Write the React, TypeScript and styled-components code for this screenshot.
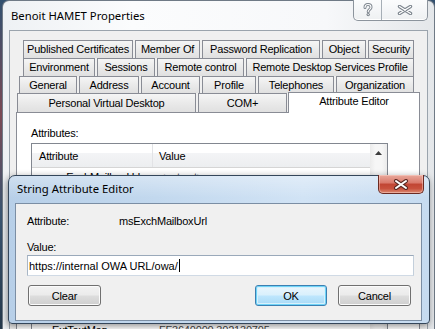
import React from 'react';
import styled, {createGlobalStyle, css} from 'styled-components';

const UI_FONT = '"Liberation Sans", Arial, sans-serif';
const CAPTION_FONT = '"Noto Sans", "Open Sans", sans-serif';

const GlobalStyle = createGlobalStyle`
  html, body {
    margin: 0;
    padding: 0;
    background: #41566e;
  }
  body {
    font-family: ${UI_FONT};
    font-size: 11px;
    letter-spacing: -0.2px;
    color: #000;
  }
`;

interface ITab {
  label: string;
  width: number;
  active?: boolean;
}

const tabRows: {indent: number; height: number; tabs: ITab[]}[] = [
  {
    indent: 7,
    height: 18,
    tabs: [
      {label: 'Published Certificates', width: 110},
      {label: 'Member Of', width: 65},
      {label: 'Password Replication', width: 118},
      {label: 'Object', width: 44},
      {label: 'Security', width: 46},
    ],
  },
  {
    indent: 7,
    height: 18,
    tabs: [
      {label: 'Environment', width: 72},
      {label: 'Sessions', width: 58},
      {label: 'Remote control', width: 87},
      {label: 'Remote Desktop Services Profile', width: 168},
    ],
  },
  {
    indent: 3,
    height: 17,
    tabs: [
      {label: 'General', width: 58},
      {label: 'Address', width: 60},
      {label: 'Account', width: 59},
      {label: 'Profile', width: 54},
      {label: 'Telephones', width: 76},
      {label: 'Organization', width: 78},
    ],
  },
  {
    indent: 1,
    height: 19,
    tabs: [
      {label: 'Personal Virtual Desktop', width: 179},
      {label: 'COM+', width: 89},
      {label: 'Attribute Editor', width: 132, active: true},
    ],
  },
];

// rows behind the editor dialog are left blank, only the first and
// the last one peek out around it
const attributeRows = [
  ['msExchMailboxUrl', '<not set>'],
  ['', ''],
  ['', ''],
  ['', ''],
  ['', ''],
  ['', ''],
  ['', ''],
  ['', ''],
  ['', ''],
  ['ExtTextMsg', 'FF3640000 302130705'],
];

const App: React.FC = () => {
  return (
    <StyledScreen>
      <GlobalStyle />
      <StyledOuterWindow>
        <StyledTitleBar>
          <StyledTitle>Benoit HAMET Properties</StyledTitle>
          <StyledCaptionGroup>
            <StyledCaptionButton $w={27}>
              <svg width="12" height="14" viewBox="0 0 12 14">
                <path d="M3 4.5C3 2.3 4.5 1.5 6 1.5S9 2.3 9 4.2C9 6.3 6.2 6.4 6.2 8.8"
                  fill="none" stroke="#7d858e" strokeWidth="3" strokeLinecap="round" />
                <path d="M3 4.5C3 2.3 4.5 1.5 6 1.5S9 2.3 9 4.2C9 6.3 6.2 6.4 6.2 8.8"
                  fill="none" stroke="#fff" strokeWidth="1.1" strokeLinecap="round" />
                <circle cx="6.2" cy="11.6" r="1.7" fill="#7d858e" />
                <circle cx="6.2" cy="11.6" r="0.7" fill="#fff" />
              </svg>
            </StyledCaptionButton>
            <StyledCaptionButton $w={45}>
              <svg width="16" height="10" viewBox="0 0 16 10">
                <path d="M2.5 1.5L13.5 8.5M13.5 1.5L2.5 8.5"
                  stroke="#7d858e" strokeWidth="3.4" strokeLinecap="round" />
                <path d="M2.5 1.5L13.5 8.5M13.5 1.5L2.5 8.5"
                  stroke="#fff" strokeWidth="1.3" strokeLinecap="round" />
              </svg>
            </StyledCaptionButton>
          </StyledCaptionGroup>
        </StyledTitleBar>

        <StyledClientArea>
          {tabRows.map((row, i) => (
            <StyledTabRow key={i} $indent={row.indent} $height={row.height}>
              {row.tabs.map((tab) => (
                <StyledTab key={tab.label} $w={tab.width} $active={tab.active}>
                  {tab.label}
                </StyledTab>
              ))}
            </StyledTabRow>
          ))}
          <StyledPanel>
            <StyledPanelLabel>Attributes:</StyledPanelLabel>
            <StyledListBox>
              <StyledListColumns>
                <StyledListHeader>
                  <StyledHeaderCell $w={120}>Attribute</StyledHeaderCell>
                  <StyledHeaderCell>Value</StyledHeaderCell>
                </StyledListHeader>
                {attributeRows.map(([name, value], i) => (
                  <StyledListRow key={i}>
                    <StyledListCell $w={120}>{name}</StyledListCell>
                    <StyledListCell $muted>{value}</StyledListCell>
                  </StyledListRow>
                ))}
              </StyledListColumns>
              <StyledScrollBar>
                <StyledScrollArrow>
                  <svg width="7" height="4" viewBox="0 0 7 4">
                    <path d="M0 4L3.5 0L7 4Z" fill="#3c3c3c" />
                  </svg>
                </StyledScrollArrow>
              </StyledScrollBar>
            </StyledListBox>
          </StyledPanel>
        </StyledClientArea>
      </StyledOuterWindow>

      <StyledDialog>
        <StyledDialogTitleBar>
          <StyledDialogTitle>String Attribute Editor</StyledDialogTitle>
          <StyledCloseButton>
            <svg width="16" height="11" viewBox="0 0 16 11">
              <path d="M3 2L13 9M13 2L3 9"
                stroke="#5a2a24" strokeWidth="4" strokeLinecap="round" />
              <path d="M3 2L13 9M13 2L3 9"
                stroke="#fff" strokeWidth="2" strokeLinecap="round" />
            </svg>
          </StyledCloseButton>
        </StyledDialogTitleBar>
        <StyledDialogClient>
          <StyledFieldRow>
            <StyledFieldLabel>Attribute:</StyledFieldLabel>
            <span>msExchMailboxUrl</span>
          </StyledFieldRow>
          <StyledValueLabel>Value:</StyledValueLabel>
          <StyledInput>
            https://internal OWA URL/owa/<StyledCaret />
          </StyledInput>
          <StyledButtonRow>
            <StyledButton>Clear</StyledButton>
            <StyledButtonSpacer />
            <StyledButton $w={72} $default>OK</StyledButton>
            <StyledButton>Cancel</StyledButton>
          </StyledButtonRow>
        </StyledDialogClient>
      </StyledDialog>
    </StyledScreen>
  );
};

const StyledScreen = styled.div`
  position: relative;
  width: 435px;
  height: 329px;
  overflow: hidden;
  background: linear-gradient(180deg, #31506f 0%, #7a4a55 35%, #3a5673 65%, #26394c 100%);
`;

const StyledOuterWindow = styled.div`
  box-sizing: border-box;
  margin-left: 2px;
  width: 433px;
  height: 360px;
  border: 1px solid #6f7a86;
  border-bottom: none;
  border-radius: 7px 7px 0 0;
  background: linear-gradient(90deg, #eef1f4 0%, #fbfcfd 30%, #f7f8fa 75%, #e4e7ea 100%);
  display: flex;
  flex-direction: column;
`;

const StyledTitleBar = styled.div`
  flex: none;
  height: 29px;
  display: flex;
  align-items: flex-start;
`;

const StyledTitle = styled.div`
  flex: 1;
  padding: 7px 0 0 8px;
  font-family: ${CAPTION_FONT};
  font-size: 11.3px;
  letter-spacing: 0;
  line-height: 16px;
  color: #000;
`;

const StyledCaptionGroup = styled.div`
  display: flex;
  height: 20px;
  margin: -1px 6px 0 0;
  border: 1px solid #8c949d;
  border-top: none;
  border-radius: 0 0 5px 5px;
  overflow: hidden;
  background: linear-gradient(180deg, #fbfcfd 0%, #eef0f2 100%);
  box-shadow: inset 0 -1px 0 #fff;
`;

const StyledCaptionButton = styled.div<{$w: number}>`
  width: ${(p) => p.$w}px;
  display: flex;
  align-items: center;
  justify-content: center;
  & + & {
    border-left: 1px solid #a6aeb6;
  }
`;

const StyledClientArea = styled.div`
  flex: none;
  margin: 0 6px 0 6px;
  padding: 9px 7px 0 6px;
  border: 1px solid #9ba4ad;
  border-bottom: none;
  background: #f0f0f0;
`;

const StyledTabRow = styled.div<{$indent: number; $height: number}>`
  display: flex;
  align-items: flex-end;
  height: ${(p) => p.$height}px;
  padding-left: ${(p) => p.$indent}px;
`;

const StyledTab = styled.div<{$w: number; $active?: boolean}>`
  box-sizing: border-box;
  flex: none;
  width: ${(p) => p.$w}px;
  height: 100%;
  margin-right: 2px;
  border: 1px solid #898c95;
  border-bottom: none;
  background: linear-gradient(180deg, #f5f5f5 0%, #e9e9e9 55%, #e0e0e0 100%);
  display: flex;
  align-items: center;
  justify-content: center;
  white-space: nowrap;
  font-size: 11px;
  line-height: 13px;
  ${(p) => p.$active && css`
    position: relative;
    z-index: 1;
    height: 21px;
    margin: 0 0 -1px -1px;
    padding-bottom: 3px;
    background: #fff;
  `}
`;

const StyledPanel = styled.div`
  height: 260px;
  padding: 14px 0 0 14px;
  border: 1px solid #898c95;
  background: #fff;
`;

const StyledPanelLabel = styled.div`
  line-height: 13px;
`;

const StyledListBox = styled.div`
  display: flex;
  width: 357px;
  height: 220px;
  margin-top: 3px;
  box-sizing: border-box;
  border: 1px solid #828790;
  background: #fff;
`;

const StyledListColumns = styled.div`
  flex: 1;
`;

const StyledListHeader = styled.div`
  display: flex;
  height: 23px;
  border-bottom: 1px solid #d5d5d5;
  background: linear-gradient(180deg, #ffffff 0%, #ffffff 40%, #f3f4f6 41%, #eceef0 100%);
`;

const StyledHeaderCell = styled.div<{$w?: number}>`
  ${(p) => (p.$w ? css`width: ${p.$w}px;` : css`flex: 1;`)}
  box-sizing: border-box;
  display: flex;
  align-items: center;
  padding-left: 7px;
  padding-top: 1px;
  & + & {
    border-left: 1px solid #e2e3e6;
    padding-left: 6px;
  }
`;

const StyledListRow = styled.div`
  display: flex;
  height: 17px;
  align-items: center;
`;

const StyledListCell = styled.div<{$w?: number; $muted?: boolean}>`
  ${(p) => (p.$w ? css`width: ${p.$w}px;` : css`flex: 1;`)}
  box-sizing: border-box;
  padding-left: 20px;
  white-space: nowrap;
  overflow: hidden;
  color: ${(p) => (p.$muted ? '#444' : '#000')};
  & + & {
    padding-left: 7px;
  }
`;

const StyledScrollBar = styled.div`
  width: 17px;
  background: linear-gradient(90deg, #ebebeb 0%, #f6f6f6 30%, #f6f6f6 70%, #ebebeb 100%);
`;

const StyledScrollArrow = styled.div`
  height: 17px;
  display: flex;
  align-items: center;
  justify-content: center;
`;

const StyledDialog = styled.div`
  position: absolute;
  left: 8px;
  top: 175px;
  width: 422px;
  height: 149px;
  box-sizing: border-box;
  border: 1px solid #34465a;
  border-radius: 7px 7px 4px 4px;
  background:
    linear-gradient(180deg, rgba(255, 255, 255, 0.35) 0%, rgba(255, 255, 255, 0) 22px),
    linear-gradient(90deg, #b7cfe8 0%, #c2d8ee 35%, #d1e3f5 70%, #c6dbf0 100%);
  box-shadow: -1px 2px 7px rgba(0, 0, 0, 0.45);
  display: flex;
  flex-direction: column;
`;

const StyledDialogTitleBar = styled.div`
  flex: none;
  height: 27px;
  display: flex;
  align-items: flex-start;
`;

const StyledDialogTitle = styled.div`
  flex: 1;
  padding: 5px 0 0 8px;
  font-family: ${CAPTION_FONT};
  font-size: 11.3px;
  letter-spacing: 0;
  line-height: 16px;
  color: #000;
`;

const StyledCloseButton = styled.div`
  box-sizing: border-box;
  width: 46px;
  height: 19px;
  margin: -1px 5px 0 0;
  border: 1px solid #6b2a22;
  border-top: none;
  border-radius: 0 0 5px 5px;
  background: linear-gradient(180deg, #e9a99c 0%, #d9786a 45%, #c14533 50%, #c8513d 75%, #dc8a72 100%);
  box-shadow: inset 0 0 0 1px rgba(255, 220, 210, 0.45);
  display: flex;
  align-items: center;
  justify-content: center;
`;

const StyledDialogClient = styled.div`
  flex: 1;
  margin: 0 7px 2px 6px;
  padding: 11px 7px 0 11px;
  border: 1px solid #7b8ea4;
  background: #f0f0f0;
  display: flex;
  flex-direction: column;
`;

const StyledFieldRow = styled.div`
  display: flex;
  line-height: 13px;
`;

const StyledFieldLabel = styled.span`
  width: 92px;
`;

const StyledValueLabel = styled.div`
  margin-top: 13px;
  line-height: 13px;
`;

const StyledInput = styled.div`
  box-sizing: border-box;
  height: 21px;
  margin-top: 1px;
  padding-left: 1px;
  border: 1px solid;
  border-color: #9aa9ba #c3cfdb #d0dae5 #a8b6c5;
  background: #fff;
  display: flex;
  align-items: center;
  white-space: pre;
  letter-spacing: 0;
`;

const StyledCaret = styled.span`
  width: 1px;
  height: 13px;
  margin-left: 1px;
  background: #000;
`;

const StyledButtonRow = styled.div`
  display: flex;
  margin: 9px 3px 0 1px;
`;

const StyledButtonSpacer = styled.div`
  flex: 1;
`;

const StyledButton = styled.div<{$w?: number; $default?: boolean}>`
  box-sizing: border-box;
  width: ${(p) => p.$w ?? 73}px;
  height: 21px;
  border: 1px solid #707070;
  border-radius: 3px;
  background: linear-gradient(180deg, #f2f2f2 0%, #ebebeb 48%, #dddddd 52%, #cfcfcf 100%);
  box-shadow: inset 0 0 0 1px #fbfbfb;
  display: flex;
  align-items: center;
  justify-content: center;
  font-family: ${UI_FONT};
  font-size: 11px;
  & + & {
    margin-left: 11px;
  }
  ${(p) => p.$default && css`
    border-color: #3c7fb1;
    box-shadow: inset 0 0 0 1px #6fd4f8, inset 0 0 0 2px #d8f0fb;
    background: linear-gradient(180deg, #eaf6fd 0%, #d9f0fc 48%, #bee6fd 52%, #a7d9f5 100%);
  `}
`;

export default App;
